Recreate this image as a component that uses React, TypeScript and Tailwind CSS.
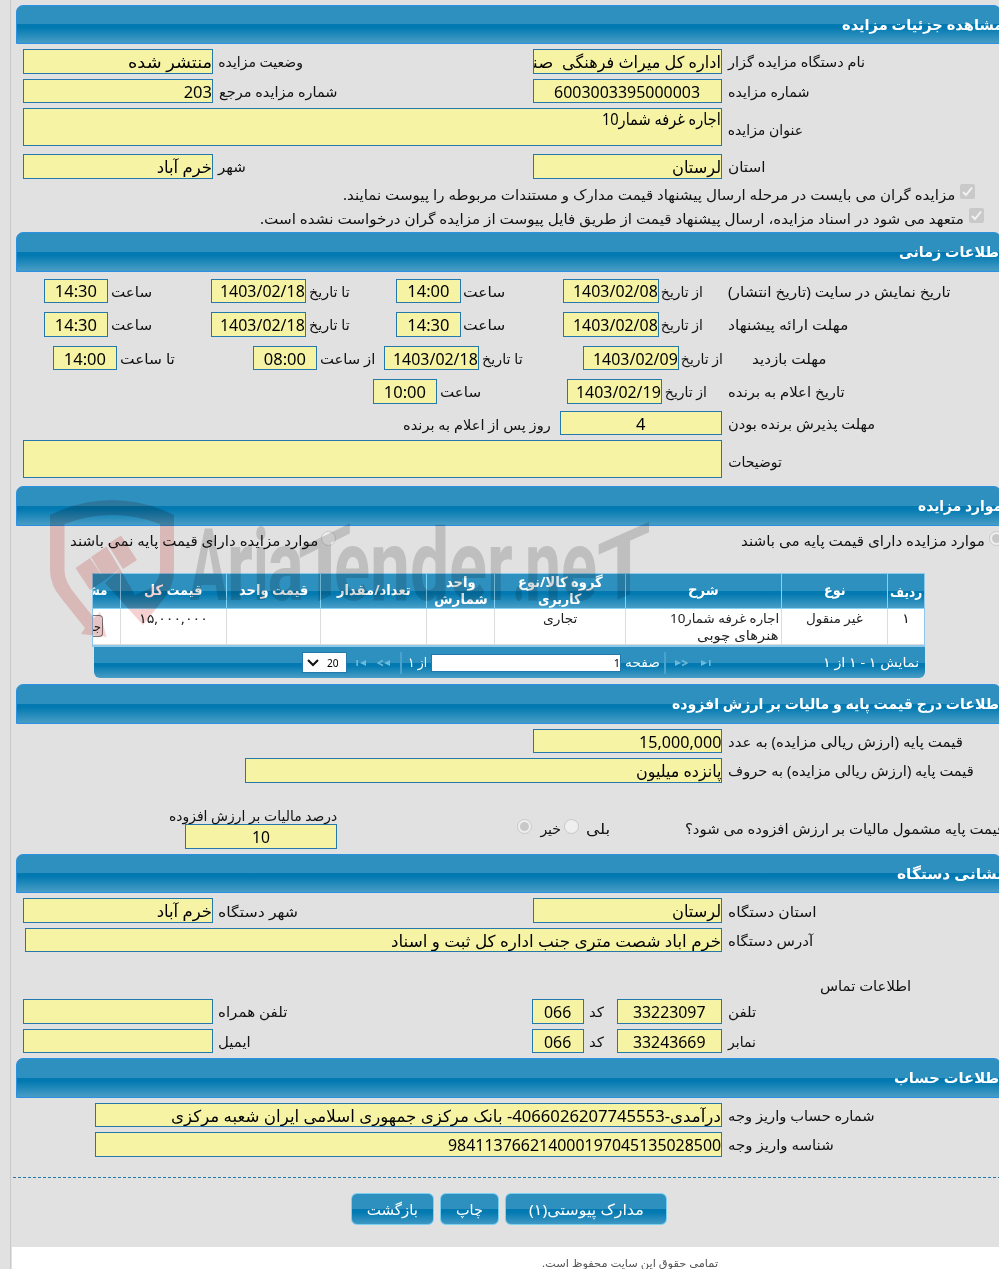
import { useLayoutEffect, useRef, useState } from "react";
import type { ReactNode } from "react";
import clsx from "clsx";

/* Text squeezed or stretched horizontally to fill the width of its own box. */
function T({ className, children }: { className: string; children: ReactNode }) {
  const outer = useRef<HTMLSpanElement>(null);
  const inner = useRef<HTMLSpanElement>(null);
  const [scale, setScale] = useState(1);
  useLayoutEffect(() => {
    if (outer.current && inner.current && inner.current.offsetWidth > 0) {
      setScale(outer.current.offsetWidth / inner.current.offsetWidth);
    }
  }, []);
  return (
    <span ref={outer} dir="rtl" className={clsx("block shrink-0", className)}>
      <span
        ref={inner}
        className="inline-block origin-right whitespace-pre"
        style={{ transform: `scaleX(${scale})` }}
      >
        {children}
      </span>
    </span>
  );
}

function Row({ className, children }: { className: string; children?: ReactNode }) {
  return <div className={clsx("flex shrink-0 items-center", className)}>{children}</div>;
}

function Field({ className, center, children }: { className: string; center?: boolean; children?: ReactNode }) {
  return (
    <div
      className={clsx(
        "flex shrink-0 items-center self-stretch overflow-hidden border border-[#2578ab] bg-[#f6f4a4] text-[16.5px] leading-5 text-black",
        center ? "justify-center" : "justify-end",
        className,
      )}
    >
      {children}
    </div>
  );
}

function Header({ className, children }: { className: string; children: ReactNode }) {
  return (
    <div
      className={clsx(
        "ml-[5px] flex w-[985px] shrink-0 items-center rounded-t-[7px] border border-[#2b90e0] bg-[linear-gradient(to_bottom,#2e90be_0%,#2e90be_50%,#0279b1_50%,#0279b1_58%,#489dc5_100%)] pb-[2px] text-[15px] leading-5 font-bold text-white",
        className,
      )}
    >
      {children}
    </div>
  );
}

function Check({ className }: { className: string }) {
  return (
    <svg viewBox="0 0 15 15" className={clsx("size-[15px] shrink-0", className)}>
      <rect width="15" height="15" rx="2" fill="#c9c9c9" />
      <path d="M3 8l3 3 6-7.5" fill="none" stroke="#f2f2f2" strokeWidth="2" />
    </svg>
  );
}

function Radio({ className, on }: { className: string; on?: boolean }) {
  return (
    <span
      className={clsx(
        "flex size-[15px] shrink-0 items-center justify-center rounded-full border border-[#c8c8c8] bg-[#efefef]",
        className,
      )}
    >
      {on && <span className="size-[9px] rounded-full bg-[#c8c8c8]" />}
    </span>
  );
}

function Th({ className, children }: { className: string; children: ReactNode }) {
  return (
    <div className={clsx("flex h-full shrink-0 flex-col items-center justify-center overflow-hidden border-r border-[#7fd4f8] pb-[3px]", className)}>
      {children}
    </div>
  );
}

function Td({ className, children }: { className: string; children?: ReactNode }) {
  return (
    <div className={clsx("flex h-full shrink-0 flex-col items-center overflow-hidden border-r border-b border-[#dcdcdc] pt-px", className)}>
      {children}
    </div>
  );
}

function Button({ className, children }: { className: string; children: ReactNode }) {
  return (
    <button
      className={clsx(
        "flex h-8 shrink-0 items-center justify-center rounded-md border border-[#7ad0f2] bg-[linear-gradient(to_bottom,#2e90be_0%,#2e90be_50%,#0279b1_50%,#0279b1_60%,#3f98c4_100%)] text-[15px] text-white",
        className,
      )}
    >
      {children}
    </button>
  );
}

function PagerArrow({ kind, className }: { kind: "step" | "end"; className: string }) {
  return (
    <svg viewBox="0 0 14 8" className={clsx("h-2 w-3.5 shrink-0", className)} fill="#6db9db">
      <path d="M1 1l6 3-6 3z" />
      {kind === "step" ? (
        <path d="M8 1.500L13 4L8 6.500" fill="none" stroke="#6db9db" strokeWidth="1.4" />
      ) : (
        <rect x="9" y="1" width="1.6" height="6" />
      )}
    </svg>
  );
}

function Watermark() {
  return (
    <div className="pointer-events-none absolute top-[498px] left-[48px] h-[145px] w-[610px] mix-blend-multiply">
      <svg viewBox="48 498 130 145" className="absolute top-0 left-0 h-[145px] w-[130px]" fill="#f6d1d1">
        <path d="M50 515Q112 485 174 515V570Q174 587 163 600L143 625L105 583L120 569L135 595L151 588Q160 579 160 570V524Q112 506 64.500 524V571Q65 582 75 594L94 618L100 612L106.500 637L81 634L85 628L61 598Q50 585 50 570Z" />
        <path d="M75.500 568L90 558L105 580L90 590Z" />
        <path d="M91 557L106.500 546.500L120 569L105 580Z" />
        <path d="M107.500 544L121 535.500L137 560L123 569Z" />
      </svg>
      <div className="absolute top-[8px] left-[142px] flex h-[120px] items-center font-[Roboto,sans-serif] text-[100px] leading-[120px] font-bold text-[#d9d9d9]">
        <T className="w-[37px]">A</T>
        <T className="w-[26px]">r</T>
        <T className="w-[15px]">i</T>
        <T className="w-[36px]">a</T>
        <T className="mt-1 -ml-[6px] w-[54px] -skew-y-[26deg] text-[88px]">T</T>
        <T className="-ml-[18px] w-[36px]">e</T>
        <T className="w-[40px]">n</T>
        <T className="w-[39px]">d</T>
        <T className="w-[38px]">e</T>
        <T className="w-[26px]">r</T>
        <T className="w-[12px]">.</T>
        <T className="w-[36px]">n</T>
        <T className="w-[36px]">e</T>
        <T className="mt-px w-[54px] -skew-y-[24deg] text-[90px]">T</T>
      </div>
    </div>
  );
}

export default function App() {
  return (
    <div className="relative h-[1269px] w-[999px] overflow-hidden bg-[#e1e1e1] font-['Noto_Sans','DejaVu_Sans',sans-serif] text-sm leading-5 text-[#111]">
      <div className="ml-[10px] flex h-full w-[1010px] flex-col border-l border-[#c8c8c8] pt-[5px]">
        <Header className="h-[39px]">
          <T className="ml-[825px] w-[161px]">مشاهده جزئیات مزایده</T>
        </Header>

        <Row className="mt-[5px] h-[25px] pl-3">
          <Field className="w-[190px]"><T className="w-[84px]">منتشر شده</T></Field>
          <T className="ml-[5px] w-[85px]">وضعیت مزایده</T>
          <Field className="ml-[230px] w-[189px]">
            <T className="mr-[9px] w-[40px]">صنایع</T>
            <T className="w-[159px]">اداره کل میراث فرهنگی</T>
          </Field>
          <T className="ml-[6px] w-[137px]">نام دستگاه مزایده گزار</T>
        </Row>
        <Row className="mt-[5px] h-6 pl-3">
          <Field className="w-[190px] pt-px"><T className="w-7">203</T></Field>
          <T className="mt-px ml-[5px] w-[119px]">شماره مزایده مرجع</T>
          <Field center className="ml-[196px] w-[189px] pt-px"><T className="w-[146px]">6003003395000003</T></Field>
          <T className="mt-px ml-[6px] w-[82px]">شماره مزایده</T>
        </Row>
        <Row className="mt-[5px] h-[38px] pl-3">
          <Field className="w-[699px] pb-[16px] text-[14.5px]"><T className="w-[119px]">اجاره غرفه شمار10</T></Field>
          <T className="mt-[5px] ml-[6px] w-[75px]">عنوان مزایده</T>
        </Row>
        <Row className="mt-2 h-[25px] pl-3">
          <Field className="w-[190px]"><T className="w-[55px]">خرم آباد</T></Field>
          <T className="ml-[5px] w-[28px]">شهر</T>
          <Field className="ml-[287px] w-[189px]"><T className="w-[49px]">لرستان</T></Field>
          <T className="ml-[6px] w-[37px]">استان</T>
        </Row>
        <Row className="mt-[5px] h-5 pl-[332px]">
          <T className="mt-[2px] w-[612px]">مزایده گران می بایست در مرحله ارسال پیشنهاد قیمت مدارک و مستندات مربوطه را پیوست نمایند.</T>
          <Check className="mb-[5px] ml-[5px]" />
        </Row>
        <Row className="mt-[4px] h-6 pl-[249px]">
          <T className="mt-[-2px] w-[704px]">متعهد می شود در اسناد مزایده، ارسال پیشنهاد قیمت از طریق فایل پیوست از مزایده گران درخواست نشده است.</T>
          <Check className="mb-[9px] ml-[5px]" />
        </Row>

        <Header className="h-10">
          <T className="ml-[882px] w-[105px]">اطلاعات زمانی</T>
        </Header>
        <Row className="mt-[7px] h-6 pl-[33px]">
          <Field center className="w-16"><T className="w-[42px]">14:30</T></Field>
          <T className="mt-px ml-[3px] w-[41px]">ساعت</T>
          <Field className="ml-[59px] w-[95px]"><T className="w-[85px]">1403/02/18</T></Field>
          <T className="mt-px ml-[3px] w-[41px]">تا تاریخ</T>
          <Field center className="ml-[46px] w-[65px]"><T className="w-[42px]">14:00</T></Field>
          <T className="mt-px ml-[2px] w-[42px]">ساعت</T>
          <Field className="ml-[58px] w-24"><T className="w-[85px]">1403/02/08</T></Field>
          <T className="mt-px ml-[2px] w-[42px]">از تاریخ</T>
          <T className="mt-px ml-[25px] w-[222px]">تاریخ نمایش در سایت (تاریخ انتشار)</T>
        </Row>
        <Row className="mt-[9px] h-[25px] pl-[33px]">
          <Field center className="w-16"><T className="w-[42px]">14:30</T></Field>
          <T className="ml-[3px] w-[41px]">ساعت</T>
          <Field className="ml-[59px] w-[95px]"><T className="w-[85px]">1403/02/18</T></Field>
          <T className="ml-[3px] w-[41px]">تا تاریخ</T>
          <Field center className="ml-[46px] w-[65px]"><T className="w-[42px]">14:30</T></Field>
          <T className="ml-[2px] w-[42px]">ساعت</T>
          <Field className="ml-[58px] w-24"><T className="w-[85px]">1403/02/08</T></Field>
          <T className="ml-[2px] w-[42px]">از تاریخ</T>
          <T className="ml-[25px] w-[120px]">مهلت ارائه پیشنهاد</T>
        </Row>
        <Row className="mt-[9px] h-6 pl-[42px]">
          <Field center className="w-16 pt-px"><T className="w-[42px]">14:00</T></Field>
          <T className="mt-px ml-[3px] w-[55px]">تا ساعت</T>
          <Field center className="ml-[78px] w-16 pt-px"><T className="w-[42px]">08:00</T></Field>
          <T className="mt-px ml-[3px] w-[55px]">از ساعت</T>
          <Field className="ml-[9px] w-[95px] pt-px"><T className="w-[85px]">1403/02/18</T></Field>
          <T className="mt-px ml-[3px] w-[41px]">تا تاریخ</T>
          <Field className="ml-[60px] w-24 pt-px"><T className="w-[85px]">1403/02/09</T></Field>
          <T className="mt-px ml-[2px] w-[42px]">از تاریخ</T>
          <T className="mt-px ml-[29px] w-[74px]">مهلت بازدید</T>
        </Row>
        <Row className="mt-[9px] h-[25px] pl-[362px]">
          <Field center className="w-16"><T className="w-[42px]">10:00</T></Field>
          <T className="ml-[3px] w-[41px]">ساعت</T>
          <Field className="ml-[86px] w-[95px]"><T className="w-[85px]">1403/02/19</T></Field>
          <T className="ml-[3px] w-[42px]">از تاریخ</T>
          <T className="ml-[21px] w-[117px]">تاریخ اعلام به برنده</T>
        </Row>
        <Row className="mt-[7px] h-6 pl-[392px]">
          <T className="mt-[3px] w-[148px]">روز پس از اعلام به برنده</T>
          <Field center className="ml-[9px] w-[162px] pt-px"><T className="w-[9px]">4</T></Field>
          <T className="mt-px ml-[6px] w-[147px]">مهلت پذیرش برنده بودن</T>
        </Row>
        <Row className="mt-[5px] h-[38px] pl-3">
          <Field className="w-[699px]" />
          <T className="mt-[5px] ml-[6px] w-[54px]">توضیحات</T>
        </Row>

        <Header className="mt-2 h-10">
          <T className="ml-[901px] w-[84px]">موارد مزایده</T>
        </Header>
        <Row className="mt-[3px] h-6 pl-[59px]">
          <T className="w-[248px]">موارد مزایده دارای قیمت پایه نمی باشند</T>
          <Radio className="mb-[6px] ml-[3px]" />
          <T className="ml-[405px] w-[244px]">موارد مزایده دارای قیمت پایه می باشند</T>
          <Radio className="mb-[6px] ml-[4px]" on />
        </Row>

        <div className="mt-5 ml-[81px] h-[74px] w-[833px] shrink-0 border border-b-2 border-[#8cc9ea] bg-white">
          <div className="flex h-[35px] border-b border-[#7fd4f8] bg-[linear-gradient(to_bottom,#2e90be_0%,#2e90be_50%,#0279b1_50%,#0279b1_58%,#489dc5_100%)] text-sm leading-[17px] font-bold text-white">
            <Th className="w-7 items-end"><T className="mr-[13px] w-[44px]">مشاهده</T></Th>
            <Th className="w-[106px]"><T className="w-[58px]">قیمت کل</T></Th>
            <Th className="w-[94px]"><T className="w-[69px]">قیمت واحد</T></Th>
            <Th className="w-[106px]"><T className="w-[74px]">تعداد/مقدار</T></Th>
            <Th className="w-[68px]">
              <T className="w-[30px]">واحد</T>
              <T className="w-[54px]">شمارش</T>
            </Th>
            <Th className="w-[131px]">
              <T className="w-[85px]">گروه کالا/نوع</T>
              <T className="w-[43px]">کاربری</T>
            </Th>
            <Th className="w-[156px]"><T className="w-[31px]">شرح</T></Th>
            <Th className="w-[106px]"><T className="w-[22px]">نوع</T></Th>
            <Th className="w-[36px] border-r-0"><T className="mt-1 w-[32px]">ردیف</T></Th>
          </div>
          <div className="flex h-[36px] text-[13px] leading-[17px] text-[#222]">
            <Td className="w-7 items-start">
              <span className="mt-[5px] flex h-[22px] w-[10px] items-center justify-end overflow-hidden rounded-r border border-l-0 border-[#777] bg-[#efefef] text-[13px]">
                <T className="mr-px w-[34px]">جزئیات</T>
              </span>
            </Td>
            <Td className="w-[106px]"><T className="w-[69px]">۱۵,۰۰۰,۰۰۰</T></Td>
            <Td className="w-[94px]" />
            <Td className="w-[106px]" />
            <Td className="w-[68px]" />
            <Td className="w-[131px]"><T className="w-[34px]">تجاری</T></Td>
            <Td className="w-[156px] items-end pr-[2px]">
              <T className="w-[109px]">اجاره غرفه شمار10</T>
              <T className="w-[82px]">هنرهای چوبی</T>
            </Td>
            <Td className="w-[106px]"><T className="w-[57px]">غیر منقول</T></Td>
            <Td className="w-[36px] border-r-0"><T className="w-[8px]">۱</T></Td>
          </div>
        </div>
        <div className="ml-[83px] flex h-[31px] w-[831px] shrink-0 items-center rounded-b-md bg-[linear-gradient(to_bottom,#2e90be_0%,#2e90be_50%,#0279b1_50%,#0279b1_60%,#489dc5_100%)] text-[13px] text-white">
          <div className="ml-[208px] flex h-[21px] w-[45px] shrink-0 items-center border border-[#2578ab] bg-white text-[11px] text-black">
            <svg viewBox="0 0 12 8" className="ml-1 h-2 w-3" fill="none" stroke="#111" strokeWidth="2">
              <path d="M1 1l5 5 5-5" />
            </svg>
            <T className="ml-2 w-[12px]">20</T>
          </div>
          <PagerArrow kind="end" className="ml-[6px] rotate-180" />
          <PagerArrow kind="step" className="ml-[10px] rotate-180" />
          <span className="ml-[9px] h-[22px] w-[2px] shrink-0 bg-[#4ba3cd]" />
          <T className="mb-[2px] ml-[6px] w-[19px]">از ۱</T>
          <div className="ml-[4px] flex h-[18px] w-[190px] shrink-0 items-center justify-end border border-[#2578ab] bg-white text-[11px] text-black">
            <T className="w-[6px]">1</T>
          </div>
          <T className="mb-[2px] ml-[4px] w-[35px]">صفحه</T>
          <span className="ml-[4px] h-[22px] w-[2px] shrink-0 bg-[#4ba3cd]" />
          <PagerArrow kind="step" className="ml-[8px]" />
          <PagerArrow kind="end" className="ml-[12px]" />
          <T className="mb-[2px] ml-[109px] w-[96px]">نمایش ۱ - ۱ از ۱</T>
        </div>

        <Header className="mt-[6px] h-10">
          <T className="ml-[655px] w-[332px]">اطلاعات درج قیمت پایه و مالیات بر ارزش افزوده</T>
        </Header>
        <Row className="mt-[5px] h-6 pl-[522px]">
          <Field className="w-[189px] pt-px"><T className="w-[82px]">15,000,000</T></Field>
          <T className="mt-px ml-[6px] w-[235px]">قیمت پایه (ارزش ریالی مزایده) به عدد</T>
        </Row>
        <Row className="mt-[5px] h-[25px] pl-[234px]">
          <Field className="w-[477px]"><T className="w-[86px]">پانزده میلیون</T></Field>
          <T className="ml-[6px] w-[246px]">قیمت پایه (ارزش ریالی مزایده) به حروف</T>
        </Row>
        <Row className="mt-[22px] h-[44px] pl-[158px]">
          <div className="flex h-full w-[168px] shrink-0 flex-col">
            <T className="h-[19px] w-[168px] pt-px">درصد مالیات بر ارزش افزوده</T>
            <Field center className="ml-4 h-[25px] pt-px"><T className="w-[18px]">10</T></Field>
          </div>
          <Radio className="mb-[2px] ml-[180px]" on />
          <T className="mt-[4px] ml-[8px] w-[21px]">خیر</T>
          <Radio className="mb-[2px] ml-[3px]" />
          <T className="mt-[4px] ml-[7px] w-[24px]">بلی</T>
          <T className="mt-[4px] ml-[75px] w-[319px]">قیمت پایه مشمول مالیات بر ارزش افزوده می شود؟</T>
        </Row>

        <Header className="mt-[5px] h-[39px]">
          <T className="ml-[880px] w-[106px]">نشانی دستگاه</T>
        </Header>
        <Row className="mt-[5px] h-[25px] pl-3">
          <Field className="w-[190px]"><T className="w-[55px]">خرم آباد</T></Field>
          <T className="mt-[2px] ml-[5px] w-[80px]">شهر دستگاه</T>
          <Field className="ml-[235px] w-[189px]"><T className="w-[49px]">لرستان</T></Field>
          <T className="mt-[2px] ml-[6px] w-[89px]">استان دستگاه</T>
        </Row>
        <Row className="mt-[5px] h-6 pl-[14px]">
          <Field className="w-[697px] pt-px"><T className="w-[330px]">خرم اباد شصت متری جنب اداره کل ثبت و اسناد</T></Field>
          <T className="mt-px ml-[6px] w-[85px]">آدرس دستگاه</T>
        </Row>
        <Row className="mt-[22px] mb-px h-6 pl-[809px]">
          <T className="w-[91px]">اطلاعات تماس</T>
        </Row>
        <Row className="h-[25px] pl-3">
          <Field className="w-[190px]" />
          <T className="ml-[5px] w-[69px]">تلفن همراه</T>
          <Field center className="ml-[245px] w-[52px]"><T className="w-[27px]">066</T></Field>
          <T className="ml-[5px] w-[15px]">کد</T>
          <Field center className="ml-[13px] w-[105px]"><T className="w-[73px]">33223097</T></Field>
          <T className="ml-[6px] w-[28px]">تلفن</T>
        </Row>
        <Row className="mt-[5px] h-6 pl-3">
          <Field className="w-[190px]" />
          <T className="mt-px ml-[5px] w-[33px]">ایمیل</T>
          <Field center className="ml-[281px] w-[52px] pt-px"><T className="w-[27px]">066</T></Field>
          <T className="mt-px ml-[5px] w-[15px]">کد</T>
          <Field center className="ml-[13px] w-[105px] pt-px"><T className="w-[73px]">33243669</T></Field>
          <T className="mt-px ml-[6px] w-[28px]">نمابر</T>
        </Row>

        <Header className="mt-[5px] h-10">
          <T className="ml-[877px] w-[110px]">اطلاعات حساب</T>
        </Header>
        <Row className="mt-[5px] h-6 pl-[84px]">
          <Field className="w-[627px] pt-px">
            <T className="w-[550px]">درآمدی-4066026207745553- بانک مرکزی جمهوری اسلامی ایران شعبه مرکزی</T>
          </Field>
          <T className="mt-px ml-[6px] w-[147px]">شماره حساب واریز وجه</T>
        </Row>
        <Row className="mt-[5px] h-[25px] pl-[84px]">
          <Field className="w-[627px]"><T className="w-[273px]">984113766214000197045135028500</T></Field>
          <T className="ml-[6px] w-[106px]">شناسه واریز وجه</T>
        </Row>

        <div className="mt-5 ml-[2px] h-px shrink-0 bg-[repeating-linear-gradient(to_right,#2578ab_0,#2578ab_3px,transparent_3px,transparent_5px)]" />
        <Row className="mt-[15px] h-8 gap-[6px] pl-[340px]">
          <Button className="w-[83px]"><T className="w-[51px]">بازگشت</T></Button>
          <Button className="w-[59px]"><T className="w-[27px]">چاپ</T></Button>
          <Button className="w-[162px]"><T className="-mr-[7px] w-[115px]">مدارک پیوستی(۱)</T></Button>
        </Row>
        <div className="mt-[22px] ml-px flex flex-1 items-start bg-white pt-[6px] pl-[530px] text-[11px] text-[#555]">
          <T className="w-[176px]">تمامی حقوق این سایت محفوظ است.</T>
        </div>
      </div>
      <Watermark />
    </div>
  );
}
